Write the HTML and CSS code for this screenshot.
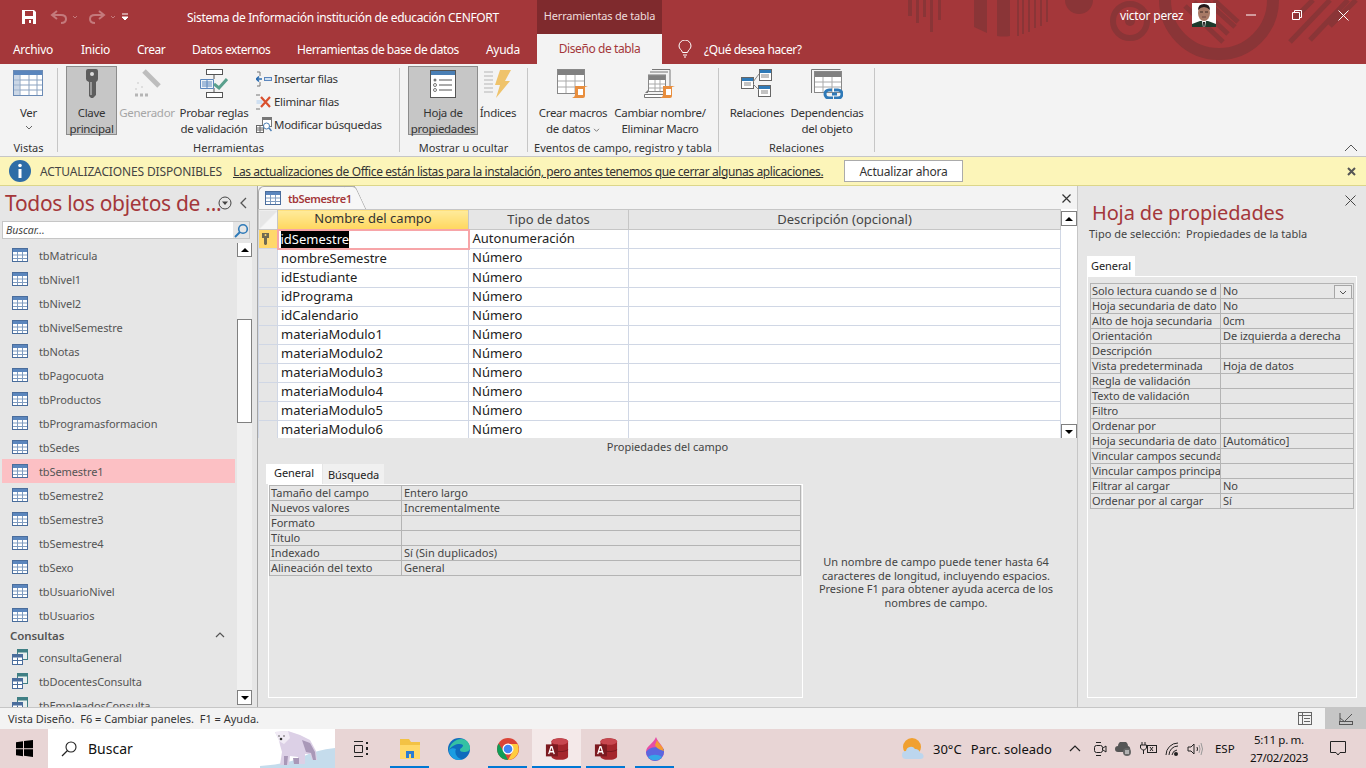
FILE: index.html
```html
<!DOCTYPE html>
<html lang="es">
  <head>
    <meta charset="UTF-8" />
    <title>Sistema de Información institución de educación CENFORT</title>
    <link rel="stylesheet" href="styles.css">
  </head>
  <body>
    <svg class="defs" width="0" height="0">
      <symbol id="i-table" viewBox="0 0 16 14">
        <rect x=".5" y=".5" width="15" height="13" fill="#fff" stroke="#4a6d9c"/>
        <rect x="1" y="1" width="14" height="3" fill="#5b86bd"/>
        <path d="M1 7h14M1 10.500h14M5.500 4v9M10.500 4v9" stroke="#7f9cc0" fill="none"/>
      </symbol>
      <symbol id="i-query" viewBox="0 0 16 16">
        <rect x="5.500" y=".5" width="10" height="10" fill="#e8f0ee" stroke="#3f7f84"/>
        <rect x="6" y="1" width="9" height="2.500" fill="#3f7f84"/>
        <rect x=".5" y="5.500" width="10" height="10" fill="#fff" stroke="#4a6d9c"/>
        <rect x="1" y="6" width="9" height="2.500" fill="#4a6d9c"/>
        <path d="M1 11.500h9M5.500 8.500v7" stroke="#4a6d9c" fill="none"/>
      </symbol>
      <symbol id="i-access" viewBox="0 0 26 26">
        <path d="M7 5c0-5 18-5 18 0v16c0 5-18 5-18 0z" fill="#a4262c"/>
        <ellipse cx="16" cy="5" rx="9" ry="3.500" fill="#c8474f"/>
        <path d="M7 13c3 3 15 3 18 0v1c-3 3-15 3-18 0z" fill="#7c1a20"/>
        <rect x="1" y="8" width="13" height="13" fill="#7c1a20"/>
        <path d="M4 18.500l2.500-8h1l2.500 8M5 16h4" stroke="#fff" stroke-width="1.400" fill="none"/>
      </symbol>
    </svg>

    <header class="titlebar">
      <svg class="deco" width="486" height="64" viewBox="0 0 486 64">
        <g fill="#8a3537">
          <rect x="28" y="0" width="4" height="16"/><rect x="36" y="0" width="3" height="23"/>
          <rect x="43" y="0" width="3" height="17"/><rect x="50" y="0" width="3" height="32"/>
          <rect x="58" y="0" width="3" height="20"/><path d="M94 0h13v33l-13-6z"/>
          <path d="M117 0h13v36q-6 1-13 0z"/><rect x="137" y="0" width="2" height="36"/>
          <rect x="142" y="0" width="2" height="34"/><rect x="148" y="0" width="2" height="32"/>
          <rect x="154" y="0" width="2" height="28"/><rect x="160" y="0" width="2" height="26"/>
          <rect x="166" y="0" width="2" height="22"/><circle cx="199" cy="0" r="14"/>
        </g>
        <circle cx="250" cy="21" r="17" fill="none" stroke="#8a3537" stroke-width="6"/>
        <circle cx="250" cy="21" r="5" fill="#8a3537"/>
        <circle cx="339" cy="0" r="54" fill="none" stroke="#8a3537" stroke-width="12"/>
        <path d="M305 6l38 36M314 2l34 32M325 0l30 27M334 0l24 22M410 42l40-42M430 40l38-40M450 26l26-26M415 18l18-18" stroke="#8a3537" stroke-width="5" fill="none"/>
      </svg>
      <div class="title-row">
        <div class="qat">
          <svg width="16" height="16" viewBox="0 0 16 16"><path d="M1 1h12l2 2v12H1z" fill="#fff"/><rect x="4" y="2" width="8" height="5" fill="#a4373a"/><rect x="4" y="10" width="8" height="5" fill="#a4373a"/><rect x="8" y="11" width="2" height="3" fill="#fff"/></svg>
          <svg class="qat-off" width="30" height="14" viewBox="0 0 30 14"><path d="M7 1L2 5l5 4M2 5h9q5 0 5 4t-5 4" fill="none" stroke="#c47a7c" stroke-width="2"/><path d="M23 6l2 2 2-2" fill="none" stroke="#c47a7c"/></svg>
          <svg class="qat-off" width="30" height="14" viewBox="0 0 30 14"><path d="M11 1l5 4-5 4M16 5H7q-5 0-5 4t5 4" fill="none" stroke="#c47a7c" stroke-width="2"/><path d="M23 6l2 2 2-2" fill="none" stroke="#c47a7c"/></svg>
          <svg class="qat-more" width="8" height="8" viewBox="0 0 8 8"><path d="M1 1h6M1 4h6L4 7z" stroke="#fff" fill="#fff"/></svg>
        </div>
        <div class="doc-title">Sistema de Información institución de educación CENFORT</div>
        <div class="context-tab">Herramientas de tabla</div>
        <div class="user">victor perez</div>
        <svg class="avatar" width="24" height="24" viewBox="0 0 24 24">
          <rect width="24" height="24" fill="#fff"/>
          <path d="M0 24v-3l8-3h8l8 3v3z" fill="#1d3a2c"/>
          <path d="M10 18h4l-1 6h-2z" fill="#fff"/><path d="M11 19h2l-.5 5h-1z" fill="#111"/>
          <ellipse cx="12" cy="10" rx="6" ry="8" fill="#a87a66"/>
          <path d="M6 7q0-6 6-6t6 6q-3-3-6-3T6 7z" fill="#23191a"/>
          <path d="M8 9h3M13 9h3" stroke="#3a2824"/><path d="M10 14h4" stroke="#6e4540"/>
        </svg>
        <div class="win-btns">
          <svg width="10" height="10" viewBox="0 0 10 10"><path d="M0 5h10" stroke="#fff"/></svg>
          <svg width="10" height="10" viewBox="0 0 10 10"><path d="M.5 2.500h7v7h-7zM2.500 2.500v-2h7v7h-2" stroke="#fff" fill="none"/></svg>
          <svg width="11" height="11" viewBox="0 0 11 11"><path d="M.5.5l10 10M10.500.5l-10 10" stroke="#fff" fill="none"/></svg>
        </div>
      </div>
      <nav class="tab-row">
        <span class="tab tab-file">Archivo</span>
        <span class="tab tab-home">Inicio</span>
        <span class="tab tab-create">Crear</span>
        <span class="tab tab-data">Datos externos</span>
        <span class="tab tab-db">Herramientas de base de datos</span>
        <span class="tab tab-help">Ayuda</span>
        <span class="tab tab-active">Diseño de tabla</span>
        <svg class="bulb" width="14" height="18" viewBox="0 0 14 18"><path d="M4.500 12.500C4 10 1 9 1 6a6 6 0 0 1 12 0c0 3-3 4-3.500 6.500zM5 15h4M6 17h2" fill="none" stroke="#fff"/></svg>
        <span class="tab tab-search">¿Qué desea hacer?</span>
      </nav>
    </header>

    <section class="ribbon">
      <div class="group group-views">
        <div class="group-body">
          <div class="big big-views">
            <svg class="big-icon" width="32" height="28" viewBox="0 0 32 28"><rect x=".5" y=".5" width="29" height="25" fill="#fff" stroke="#6b8bb5"/><rect x="1" y="1" width="28" height="4" fill="#5b86bd"/><path d="M1 10h28M1 15h28M1 20h28M7 5v20M16 5v20M24 5v20" stroke="#8ca3c0" fill="none"/><path d="M1 5h6v20H1z" fill="#a9bdd6" opacity=".6"/></svg>
            <span>Ver</span>
            <svg class="caret" width="8" height="6" viewBox="0 0 8 6"><path d="M1 1l3 3 3-3" fill="none" stroke="#666"/></svg>
          </div>
        </div>
        <div class="group-label">Vistas</div>
      </div>

      <div class="group group-tools">
        <div class="group-body">
          <div class="big big-key is-on">
            <svg class="big-icon" width="16" height="30" viewBox="0 0 16 30"><path d="M2 2q0-2 2-2h8q2 0 2 2v8q0 2-2 3v13l-3 3H7l-2-2V13q-3-1-3-3z" fill="#5d5d5d"/><circle cx="8" cy="5" r="2" fill="#ddd"/><path d="M7 13v13" stroke="#9a9a9a" stroke-width="2"/></svg>
            <span>Clave<br>principal</span>
          </div>
          <div class="big big-builder is-off">
            <svg class="big-icon" width="30" height="30" viewBox="0 0 30 30"><path d="M12 2l15 15" stroke="#bdbdbd" stroke-width="5"/><path d="M5 14h2M9 18h2M3 20h2" stroke="#c9c9c9"/><path d="M3 26h3M8 26h3M13 26h3" stroke="#b5b5b5" stroke-width="3"/></svg>
            <span>Generador</span>
          </div>
          <div class="big big-rules">
            <svg class="big-icon" width="28" height="30" viewBox="0 0 28 30"><rect x="6.500" y=".5" width="16" height="5" fill="#fff" stroke="#555"/><rect x="6.500" y="23.500" width="16" height="5" fill="#fff" stroke="#555"/><path d="M14 6v4M14 19v4" stroke="#555"/><path d="M.5 10.500h13v9H.5z" fill="#eef3f8" stroke="#5b86bd"/><path d="M2 13h10M2 15h10M2 17h10M7 11v8" stroke="#5b86bd" fill="none"/><path d="M14 15l5 4 8-9" fill="none" stroke="#5aa08d" stroke-width="3"/></svg>
            <span>Probar reglas<br>de validación</span>
          </div>
          <div class="small-list">
            <div class="small-item">
              <svg width="16" height="16" viewBox="0 0 16 16"><path d="M4 1H1M4 15H1M4 1v4M4 11v4" stroke="#777" fill="none"/><path d="M1 8h5M3 5.500L.5 8 3 10.500" stroke="#2b6cb0" stroke-width="1.600" fill="none"/><rect x="8.500" y="6.500" width="7" height="3" fill="#cfe0f2" stroke="#5b86bd"/></svg>
              <span>Insertar filas</span>
            </div>
            <div class="small-item">
              <svg width="16" height="16" viewBox="0 0 16 16"><path d="M0 1h4M0 15h4" stroke="#777"/><rect x=".5" y="6" width="6" height="4" fill="#cfe0f2"/><path d="M5 3l9 10M14 3L5 13" stroke="#d9502e" stroke-width="2.200"/></svg>
              <span>Eliminar filas</span>
            </div>
            <div class="small-item">
              <svg width="16" height="16" viewBox="0 0 16 16"><rect x="6.500" y=".5" width="9" height="9" fill="#fff" stroke="#777"/><rect x="7" y="1" width="8" height="2" fill="#777"/><rect x=".5" y="8.500" width="7" height="7" fill="#fff" stroke="#666"/><path d="M1 11h6M1 13h6M4 9v6" stroke="#666"/><circle cx="10.500" cy="9" r="3" fill="#fff" stroke="#4a7fb5"/><path d="M13 11l2.500 3" stroke="#4a7fb5" stroke-width="1.500"/></svg>
              <span>Modificar búsquedas</span>
            </div>
          </div>
        </div>
        <div class="group-label">Herramientas</div>
      </div>

      <div class="group group-show">
        <div class="group-body">
          <div class="big big-sheet is-on">
            <svg class="big-icon" width="26" height="28" viewBox="0 0 26 28"><rect x=".5" y=".5" width="25" height="27" fill="#fff" stroke="#555"/><rect x="1" y="1" width="24" height="4" fill="#4a7fb5"/><path d="M9 10h13M9 15h13M9 20h13" stroke="#555"/><circle cx="5" cy="10" r="1.500" fill="#777"/><circle cx="5" cy="15" r="1.500" fill="none" stroke="#777"/><circle cx="5" cy="20" r="1.500" fill="none" stroke="#777"/></svg>
            <span>Hoja de<br>propiedades</span>
          </div>
          <div class="big big-index">
            <svg class="big-icon" width="30" height="30" viewBox="0 0 30 30"><path d="M1 3h9M1 7h9M1 11h9M1 15h9M1 19h9M1 23h9" stroke="#b5b5b5" fill="none"/><path d="M17 1h11l-6 11h5L13 29l4-13h-5z" fill="#efc36b"/></svg>
            <span>Índices</span>
          </div>
        </div>
        <div class="group-label">Mostrar u ocultar</div>
      </div>

      <div class="group group-events">
        <div class="group-body">
          <div class="big big-macros">
            <svg class="big-icon" width="32" height="30" viewBox="0 0 32 30"><rect x=".5" y=".5" width="27" height="24" fill="#fff" stroke="#888"/><rect x="1" y="1" width="26" height="5" fill="#808080"/><path d="M1 12h26M1 18h26M9 6v18M18 6v18" stroke="#aaa" fill="none"/><path d="M18 17h13l-3 1v9q0 2-2 2H15q3-1 3-3z" fill="#e88e3e"/><path d="M21 20h5v6h-5z" fill="#fff"/></svg>
            <span>Crear macros<br>de datos <svg width="7" height="5" viewBox="0 0 8 6"><path d="M1 1l3 3 3-3" fill="none" stroke="#666"/></svg></span>
          </div>
          <div class="big big-rename">
            <svg class="big-icon" width="32" height="30" viewBox="0 0 32 30"><path d="M8 .5h18v22M6 3h18M4 6h18" fill="none" stroke="#777"/><rect x="4.500" y="6.500" width="17" height="16" fill="#fff" stroke="#888"/><rect x="5" y="7" width="16" height="4" fill="#808080"/><path d="M5 15h16M5 19h16M11 11v11M16 11v11" stroke="#aaa" fill="none"/><path d="M.5 25.500h22v3H.5z" fill="#fff" stroke="#777"/><path d="M1 24l3-3v3z" fill="#777"/><path d="M19 17h12l-3 1v9q0 2-2 2H16q3-1 3-3z" fill="#e88e3e"/><path d="M22 20h5v6h-5z" fill="#fff"/></svg>
            <span>Cambiar nombre/<br>Eliminar Macro</span>
          </div>
        </div>
        <div class="group-label">Eventos de campo, registro y tabla</div>
      </div>

      <div class="group group-rel">
        <div class="group-body">
          <div class="big big-relations">
            <svg class="big-icon" width="32" height="30" viewBox="0 0 32 30"><rect x="18.500" y=".5" width="12" height="11" fill="#fff" stroke="#666"/><rect x="19" y="1" width="11" height="3" fill="#2f7ab8"/><rect x=".5" y="8.500" width="12" height="11" fill="#fff" stroke="#666"/><rect x="1" y="9" width="11" height="3" fill="#2f7ab8"/><rect x="17.500" y="16.500" width="12" height="11" fill="#fff" stroke="#666"/><rect x="18" y="17" width="11" height="3" fill="#2f7ab8"/><path d="M12 13l6-8M12 15l6 6M20 6h8M20 8h8M3 14h7M3 16h7M20 22h7M20 24h7" stroke="#888" fill="none"/></svg>
            <span>Relaciones</span>
          </div>
          <div class="big big-deps">
            <svg class="big-icon" width="32" height="30" viewBox="0 0 32 30"><path d="M.5 24V.5h29" fill="none" stroke="#777"/><rect x="3.500" y="2.500" width="27" height="21" fill="#fff" stroke="#888"/><rect x="4" y="3" width="26" height="5" fill="#808080"/><path d="M4 13h26M4 18h26M12 8v15M21 8v15" stroke="#aaa" fill="none"/><path d="M21 21h-3a4 4 0 0 0 0 8h4M21 25h5" stroke="#2f7ab8" stroke-width="3" fill="none"/><path d="M23 21h4a4 4 0 0 1 0 8h-4" stroke="#2f7ab8" stroke-width="3" fill="none"/></svg>
            <span>Dependencias<br>del objeto</span>
          </div>
        </div>
        <div class="group-label">Relaciones</div>
      </div>
      <svg class="ribbon-fold" width="14" height="8" viewBox="0 0 14 8"><path d="M1 7l6-6 6 6" fill="none" stroke="#555"/></svg>
    </section>

    <section class="msgbar">
      <svg class="msg-icon" width="22" height="22" viewBox="0 0 22 22"><circle cx="11" cy="11" r="11" fill="#2e6ca6"/><circle cx="11" cy="5.500" r="1.800" fill="#fff"/><rect x="9.500" y="9" width="3" height="9" fill="#fff"/></svg>
      <strong class="msg-head">ACTUALIZACIONES DISPONIBLES</strong>
      <span class="msg-link">Las actualizaciones de Office están listas para la instalación, pero antes tenemos que cerrar algunas aplicaciones.</span>
      <button class="msg-btn">Actualizar ahora</button>
      <svg class="msg-close" width="9" height="9" viewBox="0 0 9 9"><path d="M1 1l7 7M8 1L1 8" stroke="#555" stroke-width="2"/></svg>
    </section>

    <main class="workspace">
      <aside class="navpane">
        <div class="nav-head">
          <span class="nav-title">Todos los objetos de ...</span>
          <svg class="nav-menu" width="14" height="14" viewBox="0 0 14 14"><circle cx="7" cy="7" r="6" fill="none" stroke="#444"/><path d="M4 5.500h6L7 9z" fill="#444"/></svg>
          <svg class="nav-hide" width="8" height="12" viewBox="0 0 8 12"><path d="M7 1L2 6l5 5" fill="none" stroke="#555" stroke-width="1.300"/></svg>
        </div>
        <div class="nav-search">
          <span class="nav-input">Buscar...</span>
          <span class="nav-search-btn"><svg width="15" height="15" viewBox="0 0 15 15"><circle cx="9" cy="6" r="4.300" fill="none" stroke="#2f7ab8" stroke-width="1.600"/><path d="M6 9l-5 5" stroke="#2f7ab8" stroke-width="2"/></svg></span>
        </div>
        <div class="nav-body">
          <ul class="nav-list">
            <li><svg width="16" height="14"><use href="#i-table"/></svg>tbMatricula</li>
            <li><svg width="16" height="14"><use href="#i-table"/></svg>tbNivel1</li>
            <li><svg width="16" height="14"><use href="#i-table"/></svg>tbNivel2</li>
            <li><svg width="16" height="14"><use href="#i-table"/></svg>tbNivelSemestre</li>
            <li><svg width="16" height="14"><use href="#i-table"/></svg>tbNotas</li>
            <li><svg width="16" height="14"><use href="#i-table"/></svg>tbPagocuota</li>
            <li><svg width="16" height="14"><use href="#i-table"/></svg>tbProductos</li>
            <li><svg width="16" height="14"><use href="#i-table"/></svg>tbProgramasformacion</li>
            <li><svg width="16" height="14"><use href="#i-table"/></svg>tbSedes</li>
            <li class="is-selected"><svg width="16" height="14"><use href="#i-table"/></svg>tbSemestre1</li>
            <li><svg width="16" height="14"><use href="#i-table"/></svg>tbSemestre2</li>
            <li><svg width="16" height="14"><use href="#i-table"/></svg>tbSemestre3</li>
            <li><svg width="16" height="14"><use href="#i-table"/></svg>tbSemestre4</li>
            <li><svg width="16" height="14"><use href="#i-table"/></svg>tbSexo</li>
            <li><svg width="16" height="14"><use href="#i-table"/></svg>tbUsuarioNivel</li>
            <li><svg width="16" height="14"><use href="#i-table"/></svg>tbUsuarios</li>
            <li class="nav-section">Consultas<svg width="10" height="6" viewBox="0 0 10 6"><path d="M1 5l4-4 4 4" fill="none" stroke="#555" stroke-width="1.200"/></svg></li>
            <li><svg width="16" height="16"><use href="#i-query"/></svg>consultaGeneral</li>
            <li><svg width="16" height="16"><use href="#i-query"/></svg>tbDocentesConsulta</li>
            <li><svg width="16" height="16"><use href="#i-query"/></svg>tbEmpleadosConsulta</li>
          </ul>
          <div class="scrollbar nav-scroll">
            <span class="sb-btn"><i class="arrow-up"></i></span>
            <span class="nav-thumb"></span>
            <span class="sb-btn sb-end"><i class="arrow-down"></i></span>
          </div>
        </div>
      </aside>

      <section class="designer">
        <div class="doc-tabs">
          <div class="doc-tab">
            <svg width="16" height="14"><use href="#i-table"/></svg>
            <span>tbSemestre1</span>
          </div>
          <svg class="doc-close" width="9" height="9" viewBox="0 0 9 9"><path d="M.5.5l8 8M8.500.5l-8 8" stroke="#333" stroke-width="1.200"/></svg>
        </div>
        <div class="grid-wrap">
          <table class="field-grid">
            <colgroup><col class="c-sel"><col class="c-name"><col class="c-type"><col></colgroup>
            <thead>
              <tr><th class="corner"></th><th class="th-active">Nombre del campo</th><th>Tipo de datos</th><th>Descripción (opcional)</th></tr>
            </thead>
            <tbody>
              <tr class="row-current">
                <td class="sel sel-current"><svg width="7" height="12" viewBox="0 0 7 12"><path d="M0 0h7v5H5v6l-1 1H3l-1-1V5H0z" fill="#6f6a52"/><circle cx="3.500" cy="2" r="1" fill="#ffd86b"/></svg></td>
                <td class="cell-current"><mark>idSemestre</mark></td><td>Autonumeración</td><td></td>
              </tr>
              <tr><td class="sel"></td><td>nombreSemestre</td><td>Número</td><td></td></tr>
              <tr><td class="sel"></td><td>idEstudiante</td><td>Número</td><td></td></tr>
              <tr><td class="sel"></td><td>idPrograma</td><td>Número</td><td></td></tr>
              <tr><td class="sel"></td><td>idCalendario</td><td>Número</td><td></td></tr>
              <tr><td class="sel"></td><td>materiaModulo1</td><td>Número</td><td></td></tr>
              <tr><td class="sel"></td><td>materiaModulo2</td><td>Número</td><td></td></tr>
              <tr><td class="sel"></td><td>materiaModulo3</td><td>Número</td><td></td></tr>
              <tr><td class="sel"></td><td>materiaModulo4</td><td>Número</td><td></td></tr>
              <tr><td class="sel"></td><td>materiaModulo5</td><td>Número</td><td></td></tr>
              <tr><td class="sel"></td><td>materiaModulo6</td><td>Número</td><td></td></tr>
            </tbody>
          </table>
          <div class="scrollbar grid-scroll">
            <span class="sb-btn"><i class="arrow-up"></i></span>
            <span class="grid-track"></span>
            <span class="sb-btn sb-end"><i class="arrow-down"></i></span>
          </div>
        </div>
        <div class="field-caption">Propiedades del campo</div>
        <div class="field-pane">
          <div class="field-left">
            <div class="prop-tabs">
              <span class="prop-tab is-active">General</span>
              <span class="prop-tab">Búsqueda</span>
            </div>
            <div class="prop-box">
              <table class="prop-table field-props">
                <tr><td>Tamaño del campo</td><td>Entero largo</td></tr>
                <tr><td>Nuevos valores</td><td>Incrementalmente</td></tr>
                <tr><td>Formato</td><td></td></tr>
                <tr><td>Título</td><td></td></tr>
                <tr><td>Indexado</td><td>Sí (Sin duplicados)</td></tr>
                <tr><td>Alineación del texto</td><td>General</td></tr>
              </table>
            </div>
          </div>
          <p class="field-help">Un nombre de campo puede tener hasta 64 caracteres de longitud, incluyendo espacios. Presione F1 para obtener ayuda acerca de los nombres de campo.</p>
        </div>
      </section>

      <aside class="sheet">
        <svg class="sheet-close" width="11" height="11" viewBox="0 0 11 11"><path d="M.5.5l10 10M10.500.5l-10 10" stroke="#444" fill="none"/></svg>
        <h2 class="sheet-title">Hoja de propiedades</h2>
        <div class="sheet-type">Tipo de selección:&nbsp; Propiedades de la tabla</div>
        <div class="prop-tabs sheet-tabs"><span class="prop-tab is-active">General</span></div>
        <div class="prop-box sheet-box">
          <table class="prop-table sheet-props">
            <tr><td>Solo lectura cuando se d</td><td class="has-drop">No<span class="drop"><svg width="8" height="5" viewBox="0 0 8 5"><path d="M1 1l3 3 3-3" fill="none" stroke="#555"/></svg></span></td></tr>
            <tr><td>Hoja secundaria de dato</td><td>No</td></tr>
            <tr><td>Alto de hoja secundaria</td><td>0cm</td></tr>
            <tr><td>Orientación</td><td>De izquierda a derecha</td></tr>
            <tr><td>Descripción</td><td></td></tr>
            <tr><td>Vista predeterminada</td><td>Hoja de datos</td></tr>
            <tr><td>Regla de validación</td><td></td></tr>
            <tr><td>Texto de validación</td><td></td></tr>
            <tr><td>Filtro</td><td></td></tr>
            <tr><td>Ordenar por</td><td></td></tr>
            <tr><td>Hoja secundaria de dato</td><td>[Automático]</td></tr>
            <tr><td>Vincular campos secunda</td><td></td></tr>
            <tr><td>Vincular campos principa</td><td></td></tr>
            <tr><td>Filtrar al cargar</td><td>No</td></tr>
            <tr><td>Ordenar por al cargar</td><td>Sí</td></tr>
          </table>
        </div>
      </aside>
    </main>

    <footer class="statusbar">
      <span>Vista Diseño.&nbsp; F6 = Cambiar paneles.&nbsp; F1 = Ayuda.</span>
      <div class="view-btns">
        <span class="view-btn"><svg width="14" height="13" viewBox="0 0 14 13"><rect x=".5" y=".5" width="13" height="12" fill="none" stroke="#666"/><path d="M1 3.500h12M4.500 1v11M6 6.500h6M6 9.500h6" stroke="#666"/></svg></span>
        <span class="view-btn is-on"><svg width="14" height="13" viewBox="0 0 14 13"><path d="M1 1v9M1 6l5 4M6 9l7-7" stroke="#555" fill="none"/><rect x=".5" y="9.500" width="13" height="3" fill="none" stroke="#555"/></svg></span>
      </div>
    </footer>

    <div class="taskbar">
      <svg class="win-logo" width="17" height="17" viewBox="0 0 17 17"><path d="M0 2.300l7-1v7H0zM8 1.100L17 0v8.300H8zM0 9.300h7v7l-7-1zM8 9.300h9V17l-9-1.200z" fill="#000"/></svg>
      <div class="task-search">
        <svg width="16" height="16" viewBox="0 0 16 16"><circle cx="10" cy="6" r="5" fill="none" stroke="#222" stroke-width="1.100"/><path d="M6.500 9.500L1 15" stroke="#222" stroke-width="1.300"/></svg>
        <span>Buscar</span>
        <svg class="bear" width="75" height="39" viewBox="0 0 75 39">
          <path d="M75 19Q56 21 42 28T0 37v2h75z" fill="#c5dcec"/>
          <path d="M19 11l-4-8 13-1 12 4 10 5 6 11 1 9h-5l-2-6-5 0 0 10h-7l0-7-8-1-1 9h-9l2-13-2-7z" fill="#dcd0e6"/>
          <path d="M42 11l8 3 5 9 1 8h-3l-2-7-5-1zM33 29h6v6h-5zM24 27h4l-1 9h-3z" fill="#a998b8"/>
          <path d="M15 3l13-1 2 7-6 6-5-3z" fill="#f1ebf5"/>
          <circle cx="21" cy="10" r="1.300" fill="#333"/>
          <circle cx="24" cy="7" r=".7" fill="#333"/><circle cx="19" cy="7" r=".7" fill="#333"/>
        </svg>
      </div>
      <svg class="task-view" width="16" height="16" viewBox="0 0 16 16"><path d="M1 .5h9M1 15.500h9M1.500 4.500h8v7h-8z" fill="none" stroke="#222"/><path d="M13 1h2v2h-2zM13 6h2v3h-2zM13 12h2v2h-2z" fill="#222"/></svg>
      <div class="task-apps">
        <span class="task-app is-open"><svg width="24" height="24" viewBox="0 0 24 24"><path d="M2 2h9l2 3h9v17H2z" fill="#f3c244"/><rect x="2" y="8" width="20" height="14" fill="#ffd868"/><path d="M8 21v-7h8v7h-3v-4h-2v4z" fill="#2b7cd3"/></svg></span>
        <span class="task-app"><svg width="24" height="24" viewBox="0 0 24 24"><circle cx="12" cy="12" r="11" fill="#0f6cbd"/><path d="M2 13C3 6 9 2 14 2c6 0 9 5 9 9 0 3-3 4-6 4-3 0-4-1-4-2 0-2 3-2 3-5-3-2-10-1-14 5z" fill="#35c1a3"/><path d="M9 12c-2 4 1 10 7 10-7 3-14-2-14-9 2-2 5-2 7-1z" fill="#1b9de2"/></svg></span>
        <span class="task-app is-open"><svg width="24" height="24" viewBox="0 0 24 24"><circle cx="12" cy="12" r="11" fill="#db4437"/><path d="M12 23a11 11 0 0 1-9.500-16.500L8 15z" fill="#0f9d58"/><path d="M12 7h9.500A11 11 0 0 1 12 23l5-9z" fill="#ffcd40"/><circle cx="12" cy="12" r="5.500" fill="#fff"/><circle cx="12" cy="12" r="4.300" fill="#4285f4"/></svg></span>
        <span class="task-app is-open is-active"><svg width="24" height="24"><use href="#i-access"/></svg></span>
        <span class="task-app is-open"><svg width="24" height="24"><use href="#i-access"/></svg></span>
        <span class="task-app is-open"><svg width="24" height="24" viewBox="0 0 24 24"><path d="M13 0c2 6 8 9 8 15a9 9 0 0 1-18 0C3 9 10 7 13 0z" fill="#e74fa5"/><path d="M3 15c3-5 10-6 18-3l0 3a9 9 0 0 1-18 0z" fill="#5a67e0"/><path d="M14 3c2 4 6 6 7 11-4-1-8-3-9-6z" fill="#f59a34"/><path d="M5 20c4-3 10-3 14 0a9 9 0 0 1-14 0z" fill="#35a6e8"/></svg></span>
      </div>
      <div class="tray">
        <svg class="tray-weather" width="22" height="22" viewBox="0 0 22 22"><circle cx="10" cy="9" r="9" fill="#f0a030"/><path d="M4 21a4 4 0 0 1 0-8 5 5 0 0 1 9-2 5 5 0 0 1 5 4 3 3 0 0 1 1 6z" fill="#bcd6ee"/></svg>
        <span class="tray-temp">30°C</span>
        <span class="tray-sky">Parc. soleado</span>
        <svg class="tray-up" width="12" height="7" viewBox="0 0 12 7"><path d="M1 6l5-5 5 5" fill="none" stroke="#222" stroke-width="1.200"/></svg>
        <svg class="tray-i" width="14" height="16" viewBox="0 0 14 16"><rect x="1.500" y="4.500" width="8" height="7" rx="2" fill="none" stroke="#222"/><path d="M10 7l3-2v6l-3-2M3 1.500h5M3 14.500h5" stroke="#222" fill="none"/></svg>
        <svg class="tray-i" width="17" height="14" viewBox="0 0 17 14"><path d="M3 10a3 3 0 0 1 0-6 5 5 0 0 1 10 0 3 3 0 0 1 2 4l-3 2z" fill="#555"/><circle cx="12" cy="10" r="4" fill="#666"/><path d="M11 8v4M13 8v4" stroke="#fff"/></svg>
        <svg class="tray-i" width="17" height="13" viewBox="0 0 17 13"><path d="M2 0v3M5 0v3M.5 3h6v3l-2 2H2.500l-2-2zM3.500 8v4" stroke="#222" fill="none"/><rect x="7.500" y="3.500" width="9" height="7" fill="none" stroke="#222"/><path d="M10 5l3 4M13 5l-3 4" stroke="#222"/></svg>
        <svg class="tray-i" width="14" height="14" viewBox="0 0 14 14"><path d="M1 13a12 12 0 0 1 12-12M4 13a9 9 0 0 1 9-9M7 13a6 6 0 0 1 5-5" fill="none" stroke="#222"/><circle cx="11" cy="12" r="2" fill="#222"/></svg>
        <svg class="tray-i" width="16" height="14" viewBox="0 0 16 14"><path d="M1 5h3l3-3v10L4 9H1z" fill="none" stroke="#222"/><path d="M10 5q1 2 0 4" fill="none" stroke="#222"/><path d="M12 3q2 4 0 8M14 1q3 6 0 12" fill="none" stroke="#999"/></svg>
        <span class="tray-lang">ESP</span>
        <div class="tray-clock"><span>5:11 p. m.</span><span>27/02/2023</span></div>
        <svg class="tray-note" width="16" height="15" viewBox="0 0 16 15"><path d="M.5.5h15v11H10l-2 2.500-2-2.500H.5z" fill="none" stroke="#222"/></svg>
      </div>
    </div>
  </body>
</html>
```

FILE: styles.css
```css
html,
body {
  margin: 0;
  padding: 0;
}
body {
  width: 1366px;
  height: 768px;
  overflow: hidden;
  font-family: "Noto Sans", "Open Sans", sans-serif;
  font-size: 12px;
  color: #333;
  background: #e6e6e6;
}
.defs {
  position: absolute;
}
ul {
  list-style: none;
  margin: 0;
  padding: 0;
}
svg {
  flex: none;
}

/* title bar */
.titlebar {
  position: relative;
  height: 64px;
  background: #a4373a;
  color: #fff;
}
.deco {
  position: absolute;
  top: 0;
  right: 0;
}
.title-row {
  position: relative;
  display: flex;
  height: 34px;
}
.qat {
  display: flex;
  align-items: center;
  width: 187px;
  padding: 0 0 0 21px;
  box-sizing: border-box;
  height: 34px;
}
.qat-off {
  margin-left: 13px;
}
.qat-off + .qat-off {
  margin-left: 8px;
}
.qat-more {
  margin-left: 3px;
}
.doc-title {
  width: 350px;
  line-height: 35px;
  letter-spacing: -0.34px;
  white-space: nowrap;
  font-size: 12px;
}
.context-tab {
  width: 125px;
  height: 34px;
  line-height: 32px;
  background: #7f2a2d;
  color: #eedcdc;
  text-align: center;
  font-size: 11px;
  letter-spacing: -0.2px;
}
.user {
  margin-left: 458px;
  width: 61px;
  line-height: 32px;
  font-size: 12px;
  white-space: nowrap;
  letter-spacing: -0.2px;
}
.avatar {
  margin: 3px 0 0 11px;
}
.win-btns {
  display: flex;
  align-items: center;
  height: 30px;
  margin-left: 30px;
  gap: 36px;
}
.tab-row {
  position: relative;
  display: flex;
  align-items: center;
  height: 30px;
}
.tab {
  white-space: nowrap;
  font-size: 12px;
  letter-spacing: -0.3px;
}
.tab-file {
  margin-left: 13px;
  width: 68px;
}
.tab-home {
  width: 56px;
}
.tab-create {
  width: 55px;
  letter-spacing: -0.5px;
}
.tab-data {
  width: 105px;
  letter-spacing: -0.5px;
}
.tab-db {
  width: 189px;
  letter-spacing: -0.5px;
}
.tab-help {
  width: 51px;
}
.tab-active {
  width: 125px;
  height: 30px;
  line-height: 30px;
  text-align: center;
  background: #f3f3f3;
  color: #a4373a;
  letter-spacing: -0.4px;
}
.bulb {
  margin-left: 16px;
}
.tab-search {
  margin-left: 12px;
  letter-spacing: -0.45px;
}

/* ribbon */
.ribbon {
  position: relative;
  display: flex;
  height: 92px;
  background: #f3f3f3;
  border-bottom: 1px solid #c6c6c6;
  box-sizing: content-box;
}
.group {
  position: relative;
  display: flex;
  flex-direction: column;
  flex: none;
  height: 84px;
  margin-top: 4px;
  border-right: 1px solid #c6c6c6;
  box-sizing: border-box;
}
.group-views {
  width: 58px;
}
.group-tools {
  width: 342px;
}
.group-show {
  width: 128px;
}
.group-events {
  width: 191px;
}
.group-rel {
  width: 156px;
}
.group-body {
  display: flex;
  flex: none;
  height: 74px;
  margin-top: -2px;
}
.group-label {
  text-align: center;
  font-size: 11px;
  line-height: 16px;
  white-space: nowrap;
}
.big {
  display: flex;
  flex-direction: column;
  align-items: center;
  height: 69px;
  box-sizing: border-box;
  text-align: center;
  font-size: 11.500px;
  line-height: 16px;
  letter-spacing: -0.3px;
  white-space: nowrap;
  border: 1px solid transparent;
}
.big-icon {
  height: 30px;
  margin: 2px 0 6px;
}
.is-on {
  background: #c6c6c6;
  border-color: #8c8c8c;
}
.is-off {
  color: #a6a6a6;
}
.big-views {
  width: 58px;
}
.caret {
  margin-top: 4px;
}
.big-key {
  width: 51px;
  margin-left: 8px;
}
.big-builder {
  width: 58px;
  margin-left: 1px;
}
.big-rules {
  width: 76px;
}
.small-list {
  margin-left: 4px;
  padding-top: 1px;
}
.small-item {
  display: flex;
  align-items: center;
  gap: 2px;
  height: 23px;
  font-size: 11.500px;
  letter-spacing: -0.3px;
  white-space: nowrap;
}
.big-sheet {
  width: 70px;
  margin-left: 8px;
}
.big-index {
  width: 40px;
}
.big-macros {
  width: 82px;
  margin-left: 4px;
}
.big-rename {
  width: 96px;
  margin-left: -2px;
}
.big-relations {
  width: 60px;
  margin-left: 8px;
}
.big-deps {
  width: 80px;
  margin-left: 0;
}
.ribbon-fold {
  position: absolute;
  right: 8px;
  bottom: 4px;
}

/* message bar */
.msgbar {
  position: relative;
  display: flex;
  align-items: center;
  height: 28px;
  background: #fcf5b9;
  border-bottom: 1px solid #dcd68a;
  white-space: nowrap;
}
.msg-icon {
  margin-left: 9px;
}
.msg-head {
  margin-left: 9px;
  width: 193px;
  font-weight: 400;
  font-size: 12px;
  letter-spacing: -0.14px;
  color: #444;
}
.msg-link {
  width: 611px;
  text-decoration: underline;
  font-size: 12px;
  letter-spacing: -0.4px;
}
.msg-btn {
  width: 119px;
  height: 22px;
  padding: 0;
  background: #fff;
  border: 1px solid #ababab;
  font: inherit;
  color: #333;
  letter-spacing: -0.2px;
}
.msg-close {
  margin-left: 384px;
}

/* main area */
.workspace {
  display: flex;
  height: 521px;
}
.navpane {
  flex: none;
  width: 257px;
  background: #e6e6e6;
  border-right: 1px solid #a6a6a6;
  overflow: hidden;
}
.nav-head {
  display: flex;
  align-items: center;
  height: 34px;
  padding-left: 5px;
}
.nav-title {
  width: 213px;
  font-size: 21px;
  color: #a4373a;
  white-space: nowrap;
  letter-spacing: -0.3px;
}
.nav-hide {
  margin-left: 7px;
}
.nav-search {
  display: flex;
  margin: 1px 0 0 2px;
  width: 248px;
  height: 18px;
  border: 1px solid #c6c6c6;
  box-sizing: border-box;
  background: #fff;
}
.nav-input {
  flex: 1;
  padding-left: 3px;
  font-size: 10.500px;
  font-style: italic;
  line-height: 16px;
  color: #444;
}
.nav-search-btn {
  display: flex;
  align-items: center;
  justify-content: center;
  width: 16px;
  background: #e6e6e6;
}
.nav-body {
  position: relative;
  height: 467px;
  margin-top: 4px;
  overflow: hidden;
}
.nav-list li {
  display: flex;
  align-items: center;
  gap: 11px;
  height: 24px;
  margin-left: 2px;
  width: 233px;
  padding-left: 10px;
  box-sizing: border-box;
  font-size: 11px;
  letter-spacing: -0.1px;
  color: #555;
  white-space: nowrap;
}
.nav-list li.is-selected {
  background: #fcc0c4;
}
.nav-list li.nav-section {
  justify-content: space-between;
  height: 18px;
  padding: 0 10px 2px 8px;
  font-size: 11.500px;
  font-weight: 600;
}
.scrollbar {
  position: absolute;
  display: flex;
  flex-direction: column;
  width: 16px;
  box-sizing: border-box;
  background: #f0f0f0;
}
.nav-scroll {
  top: -1px;
  left: 237px;
  width: 15px;
  height: 463px;
}
.sb-btn {
  display: flex;
  align-items: center;
  justify-content: center;
  flex: none;
  height: 15px;
  background: #fff;
  border: 1px solid #808080;
  box-sizing: border-box;
}
.sb-end {
  margin-top: auto;
}
.arrow-up {
  border: 4px solid transparent;
  border-top: 0;
  border-bottom: 4px solid #000;
}
.arrow-down {
  border: 4px solid transparent;
  border-bottom: 0;
  border-top: 4px solid #000;
}
.nav-thumb {
  height: 104px;
  margin-top: 62px;
  background: #fff;
  border: 1px solid #808080;
  box-sizing: border-box;
}

/* table designer */
.designer {
  flex: none;
  width: 820px;
  background: #e6e6e6;
  border-right: 1px solid #c6c6c6;
  box-sizing: border-box;
}
.doc-tabs {
  position: relative;
  height: 23px;
  background: #f3f3f3;
}
.doc-tab {
  position: relative;
  display: flex;
  align-items: center;
  gap: 7px;
  width: 90px;
  height: 22px;
  padding-left: 6px;
  background: #f7f7f7;
  border: 1px solid #ababab;
  border-right: 0;
  border-bottom: 0;
  border-radius: 6px 0 0 0;
  color: #a4373a;
  font-size: 11px;
  font-weight: 600;
  letter-spacing: -0.4px;
  white-space: nowrap;
}
.doc-tab::after {
  content: "";
  position: absolute;
  top: -1px;
  right: -6px;
  width: 12px;
  height: 23px;
  background: #f7f7f7;
  border-top: 1px solid #ababab;
  border-right: 1px solid #ababab;
  border-top-right-radius: 4px;
  transform: skewX(25deg);
  box-sizing: border-box;
}
.doc-tab span {
  position: relative;
  z-index: 1;
}
.doc-close {
  position: absolute;
  top: 8px;
  right: 6px;
}
.grid-wrap {
  position: relative;
  height: 229px;
  background: #fff;
  overflow: hidden;
}
.field-grid {
  width: 803px;
  table-layout: fixed;
  border-collapse: collapse;
  font-size: 13px;
  color: #222;
}
.c-sel {
  width: 19px;
}
.c-name {
  width: 191px;
}
.c-type {
  width: 160px;
}
.field-grid th {
  height: 20px;
  padding: 0 0 1px;
  line-height: 17px;
  font-weight: 400;
  background: #e6e6e6;
  border: 1px solid #c6c6c6;
  box-sizing: border-box;
  color: #444;
}
.field-grid th.corner {
  background: linear-gradient(135deg, #e6e6e6 50%, #f6f6f6 50%);
}
.field-grid th.th-active {
  background: linear-gradient(#ffeb9c, #ffd75e);
  color: #333;
}
.field-grid td {
  height: 19px;
  padding: 0 0 2px 3px;
  border: 1px solid #d0d7e5;
  box-sizing: border-box;
  white-space: nowrap;
  overflow: hidden;
  line-height: 16px;
}
.field-grid td.sel {
  padding: 0;
  background: #e6e6e6;
  border-color: #d0d7e5;
}
.field-grid td.sel-current {
  background: #ffd86b;
  padding-left: 3px;
}
.sel-current svg {
  display: block;
}
.field-grid td.cell-current {
  border: 2px solid #f7a5a8;
  padding: 0 0 1px 2px;
}
mark {
  background: #000;
  color: #fff;
}
.grid-scroll {
  top: 2px;
  right: 0;
  height: 228px;
  background: #fff;
}
.grid-track {
  flex: 1;
}
.field-caption {
  height: 26px;
  text-align: center;
  line-height: 17px;
  font-size: 11px;
  color: #444;
}
.field-pane {
  display: flex;
  padding-left: 8px;
}
.field-left {
  width: 537px;
}
.prop-tabs {
  display: flex;
  height: 20px;
}
.prop-tab {
  padding: 0 5px;
  font-size: 11px;
  line-height: 21px;
  background: #f0f0f0;
  color: #222;
  margin-left: 1px;
  letter-spacing: -0.1px;
}
.prop-tab.is-active {
  width: 56px;
  padding: 0;
  margin-left: 0;
  text-align: center;
  background: #fff;
  line-height: 18px;
}
.prop-box {
  background: #e6e6e6;
  border: 1px solid #fff;
  box-sizing: border-box;
}
.field-left .prop-box {
  height: 214px;
  margin-left: 2px;
  width: 535px;
}
.prop-table {
  border-collapse: collapse;
  table-layout: fixed;
  font-size: 11px;
  color: #444;
}
.prop-table td {
  height: 15px;
  padding: 0 0 1px 1px;
  border: 1px solid #b4b4b4;
  box-sizing: border-box;
  white-space: nowrap;
  overflow: hidden;
  line-height: 13px;
}
.prop-table td + td {
  padding-left: 2px;
}
.field-props {
  width: 532px;
}
.field-props td:first-child {
  width: 132px;
}
.field-help {
  width: 244px;
  margin: 91px 0 0 11px;
  text-align: center;
  font-size: 11px;
  line-height: 13.500px;
  color: #444;
}

/* property sheet */
.sheet {
  position: relative;
  flex: 1;
  padding-left: 9px;
  background: #e6e6e6;
}
.sheet-close {
  position: absolute;
  top: 9px;
  right: 10px;
}
.sheet-title {
  margin: 13px 0 0 5px;
  font-size: 20px;
  font-weight: 400;
  line-height: 27px;
  letter-spacing: -0.15px;
  color: #a4373a;
}
.sheet-type {
  margin: 0 0 0 2px;
  height: 30px;
  font-size: 11px;
  line-height: 15px;
  color: #444;
  white-space: nowrap;
}
.sheet-tabs .prop-tab.is-active {
  width: 48px;
  line-height: 20px;
}
.sheet-box {
  width: 270px;
  height: 422px;
  padding: 6px 0 0 2px;
}
.sheet-props {
  width: 264px;
}
.sheet-props td:first-child {
  width: 130px;
}
.sheet-props td {
  letter-spacing: -0.05px;
}
.has-drop {
  position: relative;
}
.drop {
  position: absolute;
  top: 1px;
  right: 1px;
  display: flex;
  align-items: center;
  justify-content: center;
  width: 16px;
  height: 12px;
  border: 1px solid #a6a6a6;
  background: #ececec;
}

/* status bar */
.statusbar {
  display: flex;
  align-items: center;
  justify-content: space-between;
  height: 21px;
  padding-left: 8px;
  background: #f3f3f3;
  border-top: 1px solid #c6c6c6;
  box-sizing: content-box;
  font-size: 11px;
  color: #333;
}
.view-btns {
  display: flex;
  height: 21px;
}
.view-btn {
  display: flex;
  align-items: center;
  justify-content: center;
  width: 41px;
}
.view-btn.is-on {
  background: #c6c6c6;
}

/* taskbar */
.taskbar {
  display: flex;
  align-items: center;
  height: 39px;
  background: #e8d5d5;
  color: #111;
}
.win-logo {
  margin-left: 16px;
}
.task-search {
  display: flex;
  align-items: center;
  overflow: hidden;
  width: 287px;
  height: 39px;
  margin-left: 15px;
  padding-left: 13px;
  box-sizing: border-box;
  background: #fff;
  font-size: 14px;
}
.task-search span {
  margin-left: 11px;
  flex: 1;
}
.task-view {
  margin-left: 18px;
}
.task-apps {
  display: flex;
  margin-left: 16px;
}
.task-app {
  position: relative;
  display: flex;
  align-items: center;
  justify-content: center;
  width: 49px;
  height: 39px;
  box-sizing: border-box;
}
.task-app.is-open::after {
  content: "";
  position: absolute;
  left: 5px;
  right: 5px;
  bottom: 0;
  height: 2px;
  background: #0078d4;
}
.task-app.is-active {
  background: #f4e9e9;
}
.task-app.is-active::after {
  left: 0;
  right: 0;
}
.tray {
  display: flex;
  align-items: center;
  margin-left: 223px;
  white-space: nowrap;
}
.tray-temp {
  margin-left: 9px;
  font-size: 13px;
}
.tray-sky {
  margin-left: 9px;
  font-size: 13px;
}
.tray-up {
  margin: 0 12px 0 17px;
}
.tray-i {
  margin-right: 8px;
}
.tray-lang {
  margin-left: 4px;
  width: 31px;
  font-size: 11.500px;
}
.tray-clock {
  display: flex;
  flex-direction: column;
  align-items: center;
  width: 66px;
  font-size: 11.500px;
  line-height: 18px;
  letter-spacing: -0.3px;
}
.tray-note {
  margin-left: 18px;
}
```
